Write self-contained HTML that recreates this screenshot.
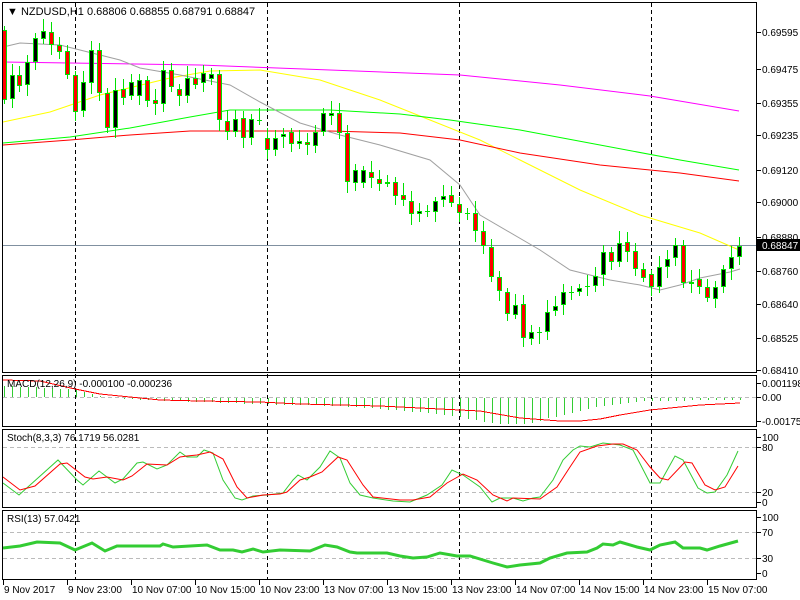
<!DOCTYPE html>
<html><head><meta charset="utf-8">
<style>
html,body{margin:0;padding:0;background:#fff;width:800px;height:600px;overflow:hidden}
svg{display:block}
text{font-family:"Liberation Sans",sans-serif;font-size:10px;fill:#000}
</style></head>
<body>
<svg id="s" width="800" height="600" xmlns="http://www.w3.org/2000/svg" shape-rendering="crispEdges">
<rect width="800" height="600" fill="#fff"/>
<g id="g"></g>
<!-- panel borders -->
<g fill="none" stroke="#000" stroke-width="1">
<rect x="2.5" y="2.5" width="754" height="370"/>
<rect x="2.5" y="375.5" width="754" height="51"/>
<rect x="2.5" y="429.5" width="754" height="78"/>
<rect x="2.5" y="510.5" width="754" height="69"/>
</g>
<text x="7" y="15" style="font-size:11px">▼ NZDUSD,H1  0.68806 0.68855 0.68791 0.68847</text>
<text x="7" y="387">MACD(12,26,9) -0.000100 -0.000236</text>
<text x="7" y="441">Stoch(8,3,3) 76.1719 56.0281</text>
<text x="7" y="522">RSI(13) 57.0421</text>
<g id="ax"></g>
<rect x="757" y="239" width="43" height="12" fill="#000"/>
<text x="762" y="249" style="fill:#fff">0.68847</text>
</svg>
<script>
var NS="http://www.w3.org/2000/svg",g=document.getElementById('g'),ax=document.getElementById('ax');
function el(p,t,a,txt){var e=document.createElementNS(NS,t);for(var k in a)e.setAttribute(k,a[k]);if(txt)e.textContent=txt;p.appendChild(e);return e;}
function line(p,x1,y1,x2,y2,c,w,d){var a={x1:x1,y1:y1,x2:x2,y2:y2,stroke:c,'stroke-width':w||1};if(d)a['stroke-dasharray']=d;return el(p,'line',a);}
function poly(p,pts,c,w,smooth){el(p,'polyline',{points:pts.map(function(q){return q.join(',')}).join(' '),fill:'none',stroke:c,'stroke-width':w||1,'shape-rendering':smooth?'auto':'crispEdges'});}
// grid dashed levels
[397].forEach(function(y){line(g,3,y+.5,757,y+.5,'#bbb',1,'4,3')});
[447,492].forEach(function(y){line(g,3,y+.5,757,y+.5,'#bbb',1,'4,3')});
[532,558].forEach(function(y){line(g,3,y+.5,757,y+.5,'#bbb',1,'4,3')});
// dashed verticals
[75,267,459,651].forEach(function(x){line(g,x+.5,3,x+.5,580,'#000',1,'4,3')});
// price line
line(g,3,245.5,757,245.5,'#8090a0',1);
// MAs
poly(g,[[3,62],[70,63],[200,65],[330,70],[460,75],[560,85],[650,96],[739,111]],'#ff00ff',1,1);
poly(g,[[3,122],[50,112],[100,95],[170,78],[210,71],[260,70],[320,80],[380,100],[430,120],[480,140],[520,160],[580,190],[640,215],[700,233],[739,250]],'#ffff00',1,1);
poly(g,[[3,143],[70,137],[130,128],[190,117],[230,110],[330,110],[400,114],[450,120],[520,130],[600,145],[680,160],[739,170]],'#00ff00',1,1);
poly(g,[[3,145],[70,140],[130,135],[190,131],[330,131],[400,133],[460,140],[520,153],[600,165],[680,173],[739,181]],'#ff0000',1,1);
poly(g,[[3,47],[20,43],[60,45],[80,50],[120,60],[140,68],[180,75],[230,85],[260,102],[300,123],[340,135],[380,145],[430,160],[460,185],[480,215],[540,250],[570,270],[610,280],[640,285],[660,290],[680,285],[700,278],[730,272],[740,269]],'#a0a0a0',1,1);
// candles [x,color,top,bottom]
var C=[[4,'r',30,100],[12,'b',75,99],[19,'r',75,86],[27,'b',62,85],[35,'b',38,62],[43,'b',31,39],[51,'r',32,45],[59,'r',45,52],[67,'r',51,75],[75,'r',75,112],[83,'b',82,111],[91,'b',50,83],[99,'r',50,93],[107,'r',93,128],[115,'b',90,128],[123,'r',89,98],[131,'b',82,96],[139,'b',80,96],[147,'r',80,101],[155,'r',100,104],[163,'b',70,104],[171,'r',70,87],[179,'r',89,96],[187,'b',78,96],[195,'r',78,85],[203,'b',73,83],[211,'b',74,79],[219,'r',74,120],[227,'r',121,132],[235,'b',119,132],[243,'r',118,138],[251,'b',119,138],[259,'x',120,121],[267,'r',138,150],[275,'b',138,150],[283,'b',134,137],[291,'r',132,144],[299,'b',141,144],[307,'r',142,145],[315,'b',132,146],[323,'b',113,132],[331,'b',113,116],[339,'r',113,133],[347,'r',133,182],[355,'b',170,183],
[363,'b',170,183],[371,'r',172,178],[379,'r',179,184],[387,'b',182,183],[395,'r',182,196],[403,'r',195,200],[411,'r',201,214],[419,'b',211,214],[427,'x',211,212],[435,'b',201,212],[443,'b',196,200],[451,'r',195,203],[459,'r',204,213],[467,'x',213,214],[475,'r',213,231],[483,'r',231,246],[491,'r',247,277],[499,'r',277,291],[507,'r',292,314],[515,'b',305,315],[523,'r',304,338],[531,'b',332,339],[539,'x',332,333],[547,'b',312,332],[555,'b',306,311],[563,'b',292,305],[571,'x',292,293],[579,'b',288,292],[587,'x',286,287],[595,'b',276,286],[603,'b',252,275],[611,'r',252,262],[619,'b',243,262],[627,'r',242,252],[635,'r',251,269],[643,'r',269,278],[651,'r',274,287],[659,'b',267,287],[667,'b',259,267],[675,'b',245,258],[683,'r',245,283],[691,'b',282,283],[699,'r',279,287],[707,'r',287,298],[715,'b',287,299],[723,'b',269,287],[731,'b',257,269],[739,'b',246,257]];
C.forEach(function(c,i){var x=c[0],t=c[2],b=c[3];var hi=t-4-(i*7%9),lo=b+4+(i*5%8);
 el(g,'rect',{x:x,y:hi,width:1,height:lo-hi,fill:'#00e000'});
 if(c[1]=='x'){el(g,'rect',{x:x-2,y:t,width:5,height:1,fill:'#00e000'});return;}
 el(g,'rect',{x:x-2,y:t,width:5,height:Math.max(b-t,2),fill:'#00e000'});
 if(b-t>2)el(g,'rect',{x:x-1,y:t+1,width:3,height:b-t-2,fill:c[1]=='r'?'#ff0000':'#000'});
});
// MACD histogram
var H=[[3,386],[70,389],[90,393],[105,397],[150,399],[250,403],[300,404],[340,405],[380,408],[430,412],[460,416],[480,420],[500,423],[530,423],[545,418],[560,415],[590,407],[620,403],[640,400],[740,399]];
function interp(P,x){for(var i=0;i<P.length-1;i++)if(x>=P[i][0]&&x<=P[i+1][0]){var f=(x-P[i][0])/(P[i+1][0]-P[i][0]);return P[i][1]+f*(P[i+1][1]-P[i][1]);}return P[P.length-1][1];}
for(var x=4;x<=740;x+=8){var y=Math.round(interp(H,x));if(y<397)el(g,'rect',{x:x,y:y,width:1,height:397-y,fill:'#33cc33'});else if(y>397)el(g,'rect',{x:x,y:398,width:1,height:y-397,fill:'#33cc33'});}
poly(g,[[3,380],[40,381],[75,389],[100,394],[130,397],[160,400],[200,401],[260,402],[300,404],[340,405],[380,406],[420,408],[480,411],[520,418],[560,421],[580,421],[600,419],[620,415],[650,410],[680,407],[700,405],[740,403]],'#ff0000',1);
// Stoch
poly(g,[[3,483],[19,495],[58,460],[77,480],[83,485],[99,471],[115,483],[123,479],[137,463],[143,462],[157,469],[167,465],[180,452],[187,457],[197,457],[204,450],[213,453],[223,480],[235,498],[242,500],[253,496],[267,495],[283,493],[293,480],[298,475],[307,480],[320,467],[330,451],[340,458],[350,483],[360,495],[373,498],[393,501],[410,502],[427,495],[442,485],[452,470],[463,475],[480,487],[492,502],[500,498],[513,498],[523,501],[533,498],[540,497],[553,480],[563,460],[573,450],[580,446],[590,447],[603,443],[620,445],[633,450],[650,483],[660,483],[675,456],[683,460],[698,488],[707,493],[715,492],[727,475],[738,451]],'#33cc33',1,1);
poly(g,[[3,477],[20,490],[35,486],[60,464],[67,463],[85,477],[93,479],[107,477],[123,480],[132,476],[147,464],[167,465],[180,457],[187,456],[197,455],[210,452],[223,459],[237,487],[247,498],[263,495],[280,494],[287,492],[300,480],[310,477],[322,472],[338,457],[347,460],[363,485],[373,497],[400,500],[413,500],[430,497],[447,483],[463,474],[477,480],[493,495],[507,501],[513,498],[540,499],[557,487],[570,467],[580,452],[597,446],[613,444],[623,444],[637,450],[650,467],[660,478],[668,480],[685,462],[692,463],[705,485],[715,490],[725,487],[738,466]],'#ff0000',1,1);
// RSI
poly(g,[[3,548],[20,546],[37,542],[60,543],[75,550],[92,543],[105,551],[117,546],[160,546],[163,544],[173,547],[207,545],[220,550],[233,550],[242,552],[253,549],[263,552],[280,550],[310,551],[325,545],[337,547],[350,552],[357,553],[387,553],[400,556],[413,558],[427,557],[440,553],[457,556],[470,556],[493,563],[507,567],[520,565],[540,563],[550,558],[567,553],[587,552],[597,548],[603,544],[613,545],[620,542],[637,547],[650,550],[660,545],[675,542],[683,548],[700,548],[707,550],[720,546],[738,541]],'#33cc33',3,1);
// right axis labels
[[32,'0.69595'],[69,'0.69475'],[103,'0.69355'],[135,'0.69235'],[170,'0.69120'],[202,'0.69000'],[237,'0.68880'],[271,'0.68760'],[304,'0.68640'],[338,'0.68525'],[370,'0.68410'],
 [383,'0.001198'],[397,'0.00'],[421,'-0.001759'],[437,'100'],[447,'80'],[492,'20'],[502,'0'],[517,'100'],[532,'70'],[558,'30'],[573,'0']].forEach(function(a){
 line(ax,757,a[0]+.5,761,a[0]+.5,'#000',1);el(ax,'text',{x:762,y:a[0]+4},a[1]);});
// bottom labels
['9 Nov 2017','9 Nov 23:00','10 Nov 07:00','10 Nov 15:00','10 Nov 23:00','13 Nov 07:00','13 Nov 15:00','13 Nov 23:00','14 Nov 07:00','14 Nov 15:00','14 Nov 23:00','15 Nov 07:00'].forEach(function(t,i){
 var x=3+64*i;line(ax,x+.5,580,x+.5,585,'#000',1);el(ax,'text',{x:x+1,y:593},t);});
</script>
</body></html>
